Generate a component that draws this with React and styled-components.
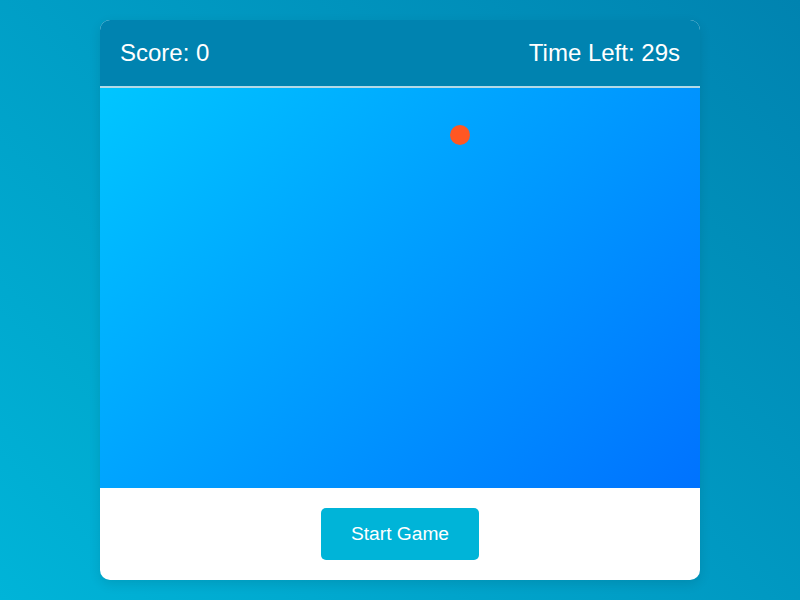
import React, { useState } from "react";
import styled, { createGlobalStyle } from "styled-components";

const GlobalStyle = createGlobalStyle`
  html, body {
    margin: 0;
    height: 100%;
  }
  body {
    font-family: "Liberation Sans", Arial, sans-serif;
    background: linear-gradient(45deg, #00b4d8, #0083b0);
  }
`;

const Page = styled.div`
  height: 600px;
  display: flex;
  justify-content: center;
  align-items: center;
`;

const Card = styled.div`
  width: 600px;
  background: #fff;
  border-radius: 10px;
  overflow: hidden;
  box-shadow: 0 4px 12px rgba(0, 0, 0, 0.1);
`;

const Header = styled.div`
  display: flex;
  justify-content: space-between;
  align-items: center;
  padding: 20px;
  background: #0083b0;
  color: #fff;
  font-size: 24px;
  line-height: 26px;
  border-bottom: 2px solid rgba(255, 255, 255, 0.7);
`;

const Field = styled.div`
  position: relative;
  height: 400px;
  background: linear-gradient(135deg, #00c6ff, #0072ff);
`;

const Dot = styled.div`
  position: absolute;
  width: 20px;
  height: 20px;
  border-radius: 50%;
  background: #ff5722;
`;

const Footer = styled.div`
  display: flex;
  justify-content: center;
  padding: 20px;
`;

const Button = styled.button`
  padding: 15px 30px;
  border: none;
  border-radius: 5px;
  background: #00b4d8;
  color: #fff;
  font-family: inherit;
  font-size: 19.2px;
  line-height: 22px;
  cursor: pointer;
`;

export default function App() {
  const [score] = useState(0);
  const [time] = useState(29);
  const [dot] = useState({ x: 350, y: 37 });

  return (
    <>
      <GlobalStyle />
      <Page>
        <Card>
          <Header>
            <span>Score: {score}</span>
            <span>Time Left: {time}s</span>
          </Header>
          <Field>
            <Dot style={{ left: dot.x, top: dot.y }} />
          </Field>
          <Footer>
            <Button>Start Game</Button>
          </Footer>
        </Card>
      </Page>
    </>
  );
}
